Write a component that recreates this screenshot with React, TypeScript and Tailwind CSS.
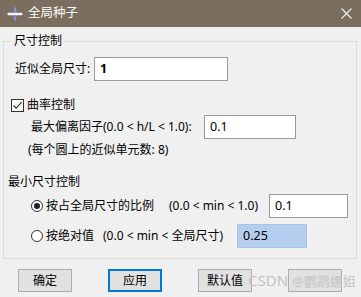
import { ReactNode } from 'react';

const font = { fontFamily: '"Noto Sans", "Noto Sans CJK SC", sans-serif' };

const TextBox = ({ value, className, bold }: { value: string; className: string; bold?: boolean }) => (
  <div
    className={`h-[24px] flex items-center pl-[5px] border text-[12.5px] text-black ${bold ? 'font-bold' : ''} ${className}`}
  >
    {value}
  </div>
);

const Radio = ({ checked }: { checked?: boolean }) => (
  <span className="w-[12px] h-[12px] rounded-full border border-[#333] bg-white flex items-center justify-center shrink-0">
    {checked && <span className="w-[6px] h-[6px] rounded-full bg-[#222]" />}
  </span>
);

const Button = ({ children, primary }: { children?: ReactNode; primary?: boolean }) => (
  <button
    className={`w-[54px] h-[23px] text-[12px] text-black flex items-center justify-center bg-[#e1e1e1] ${
      primary ? 'border-2 border-[#0078d7]' : 'border border-[#adadad]'
    }`}
  >
    {children}
  </button>
);

export default function App() {
  return (
    <div className="w-[361px] h-[297px] bg-[#f0f0f0] flex flex-col text-[12px] text-black" style={font}>
      {/* title bar */}
      <div className="h-[27px] bg-[#7a6e5e] flex items-center shrink-0">
        <svg className="ml-[7px]" width="16" height="16" viewBox="0 0 16 16">
          <defs>
            <linearGradient id="star" x1="0" y1="0" x2="0" y2="1">
              <stop offset="0" stopColor="#b4b0ee" />
              <stop offset="0.5" stopColor="#6e68c8" />
              <stop offset="1" stopColor="#a9a4e6" />
            </linearGradient>
          </defs>
          <polygon points="8,0.5 10.5,8 8,15.5 5.5,8" fill="url(#star)" />
          <rect x="0.5" y="6.8" width="15" height="2.4" rx="1" fill="#f4f4fb" />
        </svg>
        <span className="ml-[5px] text-white text-[12.5px]">全局种子</span>
        <svg className="ml-auto mr-[9px]" width="11" height="11" viewBox="0 0 11 11">
          <path d="M0.5 0.5 L10.5 10.5 M10.5 0.5 L0.5 10.5" stroke="#f2f0ea" strokeWidth="1.1" />
        </svg>
      </div>

      {/* group */}
      <fieldset className="mt-[6px] ml-[3px] mr-[4px] h-[226px] border border-[#dcdcdc]">
        <legend className="ml-[8px] px-[2px] leading-[16px]">尺寸控制</legend>
        <div className="flex flex-col">
          <div className="mt-[8px] h-[24px] flex items-center">
            <span className="ml-[11px] w-[79px]">近似全局尺寸:</span>
            <TextBox value="1" bold className="w-[134px] bg-white border-[#9a9a9a]" />
          </div>

          <div className="mt-[16px] h-[16px] flex items-center">
            <span className="ml-[7px] w-[13px] h-[13px] border border-[#333] bg-white flex items-center justify-center">
              <svg width="11" height="11" viewBox="0 0 11 11">
                <path d="M1.5 5.5 L4.2 8.3 L9.5 2.2" fill="none" stroke="#222" strokeWidth="1.1" />
              </svg>
            </span>
            <span className="ml-[3px]">曲率控制</span>
          </div>

          <div className="mt-[2px] h-[24px] flex items-center">
            <span className="ml-[27px] w-[173px]">最大偏离因子(0.0 &lt; h/L &lt; 1.0):</span>
            <TextBox value="0.1" className="w-[92px] bg-white border-[#9a9a9a]" />
          </div>

          <div className="mt-[3px] h-[16px] flex items-center">
            <span className="ml-[24px]">(每个圆上的近似单元数: 8)</span>
          </div>

          <div className="mt-[16px] h-[16px] flex items-center">
            <span className="ml-[4px]">最小尺寸控制</span>
          </div>

          <div className="mt-[4px] h-[24px] flex items-center">
            <span className="ml-[27px]">
              <Radio checked />
            </span>
            <span className="ml-[3px] w-[123px]">按占全局尺寸的比例</span>
            <span className="w-[100px]">(0.0 &lt; min &lt; 1.0)</span>
            <TextBox value="0.1" className="w-[79px] bg-white border-[#9a9a9a]" />
          </div>

          <div className="mt-[6px] h-[24px] flex items-center">
            <span className="ml-[27px]">
              <Radio />
            </span>
            <span className="ml-[3px] w-[57px]">按绝对值</span>
            <span className="w-[134px]">(0.0 &lt; min &lt; 全局尺寸)</span>
            <TextBox value="0.25" className="w-[70px] bg-[#b5cdee] border-[#a9c3e8]" />
          </div>
        </div>
      </fieldset>

      {/* buttons */}
      <div className="relative mt-[10px] pl-[18px] flex gap-[36px]">
        <Button>确定</Button>
        <Button primary>应用</Button>
        <Button>默认值</Button>
        <Button />
        <span className="absolute left-[248px] top-[1px] text-[15px] text-[#c4c4c4] whitespace-nowrap leading-[20px]">
          CSDN <span className="text-[13px]">@鹦鹉螺姐</span>
        </span>
      </div>
    </div>
  );
}
